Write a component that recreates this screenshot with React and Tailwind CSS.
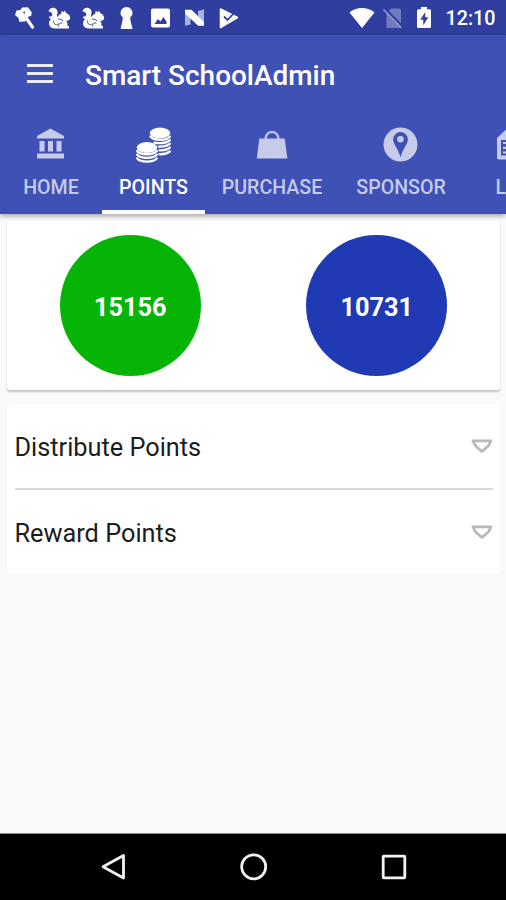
import React from "react";
import clsx from "clsx";

const Squirrel = () => (
  <svg className="size-6" viewBox="0 0 24 24" fill="#fff">
    <path d="M1.500 5.500C2 2.500 5 1 7.500 2c2.800 1 3.600 3.600 2.900 6-.3 1.300-.5 2.200.2 3 .8-1.500 2-2.500 3.600-3.200l.5-3 2.300 1.600.6-2.100 1.900 3c2.200.6 3.500 2.400 3.700 4.900-.5 1.700-2 2.600-4.200 2.800 1.600 1.200 1.900 3 1.300 4.700l1.700.5v2.300H7.500C4 22.200 1.800 20 2 17c.1-1.800 1.200-3 2.200-4-1.400-.2-2.200-1.200-2.200-2.500 1.600.3 3-.3 3.300-1.800C5.500 7 3.500 5.700 1.500 5.500z" />
    <path
      d="M6.500 14.500c-.5 3.500 2.500 5.500 5 3.200M11 13c2.500.5 4 0 5 2M11.500 20.500c-.2-2.500 1.500-4.200 4-3.500"
      fill="none"
      stroke="#303f9f"
      strokeWidth="0.900"
    />
  </svg>
);

const StatusBar = () => (
  <div className="flex h-[35px] items-center bg-[#303f9f] pl-[13px]">
    <div className="flex items-center gap-[9.8px]">
      <svg className="size-6" viewBox="0 0 24 24">
        <path
          d="M2 9L3.500 4.500 7.500 4 9 1.500 15 1.200l3.800 5.300-.6 3.300-4 1.500-2 4.200-6 .2-.6-3.700z"
          fill="#fff"
        />
        <path d="M12.500 11l7 10.200" stroke="#fff" strokeWidth="3.200" strokeLinecap="round" />
        <circle cx="11.200" cy="6.500" r="0.900" fill="#303f9f" />
      </svg>
      <Squirrel />
      <Squirrel />
      <svg className="size-6" viewBox="0 0 24 24" fill="#fff">
        <path d="M12.500 1a6 6 0 0 0-6 6c0 2 1 3.500 2.300 4.300-.2 3.700-.9 7-2 9.700v2h11.500v-2c-1.200-2.700-1.900-6-2.100-9.700C17.500 10.500 18.500 9 18.500 7a6 6 0 0 0-6-6z" />
      </svg>
      <svg className="size-6" viewBox="0 0 24 24" fill="#fff">
        <path
          fillRule="evenodd"
          d="M5 2.500h15a2 2 0 0 1 2 2v15a2 2 0 0 1-2 2H5a2 2 0 0 1-2-2v-15a2 2 0 0 1 2-2zM6.500 18h12v-2.500L15.300 11l-2.800 4.500L10 13z"
        />
      </svg>
      <svg className="size-6" viewBox="0 0 24 24">
        <path d="M3 3.800v16l5.500-1.200V8zM22 3.300v16.500L16 14.500V5z" fill="#a9b2dd" />
        <path d="M3 3.800h6.500L22 16v3.800h-5.900L3 7.600z" fill="#fff" />
      </svg>
      <svg className="size-6" viewBox="0 0 24 24">
        <path d="M4.500 3L21.500 11.500 4.500 21.500z" fill="#fff" stroke="#fff" strokeWidth="1.500" strokeLinejoin="round" />
        <path d="M8 10.500l3.500 3.500 8-8.500" fill="none" stroke="#303f9f" strokeWidth="1.800" />
      </svg>
    </div>

    <div className="ml-auto flex items-center pr-[10.5px]">
      <svg className="h-6 w-[28px]" viewBox="0 0 28 24" fill="#fff">
        <path d="M14 22L1.500 6.500C5 3.500 9 2 14 2s9 1.500 12.500 4.500z" />
      </svg>
      <svg className="ml-[5px] h-6 w-[24px]" viewBox="0 0 24 24">
        <path d="M10 2.500h8a2 2 0 0 1 2 2V22H5.500V7z" fill="#6f7bbd" />
        <path d="M4 2.500L22 21" stroke="#303f9f" strokeWidth="2.200" />
        <path d="M2.500 3.500L20.500 22" stroke="#8e98cd" strokeWidth="1.600" />
      </svg>
      <svg className="ml-[7px] h-6 w-[24px]" viewBox="0 0 24 24">
        <path d="M9 1h6v2.200h2.500a1.500 1.500 0 0 1 1.500 1.500V20.500a1.500 1.500 0 0 1-1.500 1.500h-11A1.500 1.500 0 0 1 5 20.500V4.700a1.500 1.500 0 0 1 1.500-1.500H9z" fill="#fff" />
        <path d="M13.200 6L8.300 13.800h3v5.400l5-8h-3.100z" fill="#303f9f" />
      </svg>
      <span className="ml-[9.5px] pt-0.5 text-[19.7px] leading-6 font-medium text-white">12:10</span>
    </div>
  </div>
);

const BankIcon = () => (
  <svg className="size-9" viewBox="0 0 36 36" fill="currentColor">
    <path d="M17.500 1.500L31 9v2.500H4V9zM6.500 14h5v10.500h-5zM15 14h5v10.500h-5zM23.500 14h5v10.500h-5zM4 26.500h27V31.500H4z" />
  </svg>
);

// a stack is a top disc with a few curved edges under it
const CoinsIcon = () => (
  <svg className="size-9" viewBox="0 0 36 36">
    <g fill="#fff">
      <ellipse cx="24" cy="6" rx="10.300" ry="5.400" />
      <ellipse cx="11" cy="20.500" rx="10.300" ry="5.400" />
    </g>
    <g fill="none" stroke="#fff" strokeWidth="2.300" strokeLinecap="round">
      <path d="M14.500 9.500c3 4.200 15.500 4.600 19.300.2M18.500 15.600c5 1.200 12 .6 15.300-2.300M23 19.600c4 .2 8.500-.6 10.800-2.700M23.500 23.400c4 .2 8-.6 10.300-2.700M23.500 27.200c4 .2 7.500-.6 10.300-2.700" />
      <path d="M1.200 24c3 4.300 16.500 4.300 19.600 0M1.200 27.700c3 4.300 16.500 4.300 19.600 0M1.200 31.400c3 4.300 16.500 4.300 19.600 0" />
    </g>
  </svg>
);

const BagIcon = () => (
  <svg className="size-9" viewBox="0 0 36 36">
    <path d="M5.300 11.500h25.400L33.400 31.500H2.800z" fill="currentColor" />
    <path d="M11.500 12.500c.3-5.300 2.600-7.500 6.500-7.500s6.200 2.200 6.500 7.500" fill="none" stroke="currentColor" strokeWidth="2.200" />
  </svg>
);

const PinIcon = () => (
  <svg className="size-9" viewBox="0 0 36 36">
    <circle cx="17.500" cy="17.500" r="17" fill="currentColor" />
    <path
      fillRule="evenodd"
      d="M17.500 5a7.300 7.300 0 0 0-7.300 7.300c0 5.200 4.800 8.700 7.300 18 2.500-9.300 7.300-12.800 7.300-18A7.300 7.300 0 0 0 17.500 5zm0 4a3.300 3.300 0 1 1 0 6.600 3.300 3.300 0 0 1 0-6.600z"
      fill="#3f51b5"
    />
  </svg>
);

const LogIcon = () => (
  <svg className="size-9" viewBox="0 0 36 36">
    <path d="M11 1.500h20a2 2 0 0 1 2 2v27a2 2 0 0 1-2 2H3a2 2 0 0 1-2-2V11z" fill="currentColor" />
    <path d="M5 13h26v15.500H5z" fill="#3f51b5" />
    <path d="M7 16h22M7 20.800h22M7 25.500h22" stroke="currentColor" strokeWidth="2.200" />
  </svg>
);

const tabs = [
  { label: "HOME", icon: BankIcon, width: "w-[102px]" },
  { label: "POINTS", icon: CoinsIcon, width: "w-[103px]" },
  { label: "PURCHASE", icon: BagIcon, width: "w-[134px]" },
  { label: "SPONSOR", icon: PinIcon, width: "w-[124px]" },
  { label: "LOG", icon: LogIcon, width: "w-[102px]" },
];

const Header = () => (
  <header className="relative bg-[#3f51b5] shadow-[0_2px_5px_rgba(0,0,0,0.35)]">
    <div className="flex h-[79px] items-center pl-[27px]">
      <button className="flex w-[26px] -translate-y-px flex-col gap-[5px]">
        <span className="h-[3px] bg-[#e9ebf7]" />
        <span className="h-[3px] bg-[#e9ebf7]" />
        <span className="h-[3px] bg-[#e9ebf7]" />
      </button>
      <h1 className="ml-8 pt-0.5 text-[27.95px] leading-8 font-medium whitespace-nowrap text-white">
        Smart SchoolAdmin
      </h1>
    </div>
    <nav className="flex h-[100px] overflow-hidden">
      {tabs.map(({ label, icon: Icon, width }, i) => (
        <button
          key={label}
          className={clsx(
            "flex shrink-0 flex-col items-center border-b-4 pt-[13px]",
            width,
            i === 1 ? "border-white text-white" : "border-transparent text-[#c5cbe9]"
          )}
        >
          <Icon />
          <span className="mt-[13px] text-[19.6px] leading-6 font-medium">{label}</span>
        </button>
      ))}
    </nav>
  </header>
);

const Row = ({ title }) => (
  <div className="flex h-[84px] items-center justify-between">
    <span className="pt-[3px] text-[25.3px] leading-8 text-[#1c1c1c]">{title}</span>
    <svg className="h-4 w-[22px]" viewBox="0 0 22 16">
      <path
        d="M2 2.800h18l-2.500 5L11 13.500 4.500 7.800z"
        fill="#fff"
        stroke="#b9b9b9"
        strokeWidth="2.800"
        strokeLinejoin="round"
      />
    </svg>
  </div>
);

const NavBar = () => (
  <div className="flex h-[67px] items-center justify-center gap-[108px] border-t border-[#8a8a8a] bg-black pl-px">
    <svg className="size-8" viewBox="0 0 32 32" fill="none" stroke="#f2f2f2" strokeWidth="2.800">
      <path d="M25.500 4.500v22.500L5 15.800z" strokeLinejoin="round" />
    </svg>
    <svg className="size-8" viewBox="0 0 32 32" fill="none" stroke="#f2f2f2" strokeWidth="2.800">
      <circle cx="15.700" cy="15.800" r="12" />
    </svg>
    <svg className="size-8" viewBox="0 0 32 32" fill="none" stroke="#f2f2f2" strokeWidth="2.800">
      <rect x="5.200" y="5.200" width="21.600" height="21.600" rx="0.500" />
    </svg>
  </div>
);

const App = () => {
  return (
    <div className="flex h-[900px] w-[506px] flex-col overflow-hidden bg-[#fafafa] font-[Roboto,sans-serif]">
      <StatusBar />
      <Header />
      <main className="flex-1 pt-[7px] pr-[6px] pl-[7px]">
        <section className="grid h-[169px] grid-cols-2 justify-items-center rounded-[3px] bg-white pt-[14px] shadow-[0_2px_2px_rgba(0,0,0,0.22)]">
          <div className="flex size-[141px] items-center justify-center rounded-full bg-[#05b405] pt-1 text-[25.3px] font-bold text-white">
            15156
          </div>
          <div className="flex size-[141px] items-center justify-center rounded-full bg-[#203ab3] pt-1 text-[25.3px] font-bold text-white">
            10731
          </div>
        </section>
        <section className="mt-[14px] rounded-[3px] bg-white pr-[7px] pl-[7.500px] shadow-[0_0_1px_rgba(0,0,0,0.12)]">
          <Row title="Distribute Points" />
          <hr className="border-t-2 border-[#dadada]" />
          <Row title="Reward Points" />
        </section>
      </main>
      <NavBar />
    </div>
  );
};

export default App;
